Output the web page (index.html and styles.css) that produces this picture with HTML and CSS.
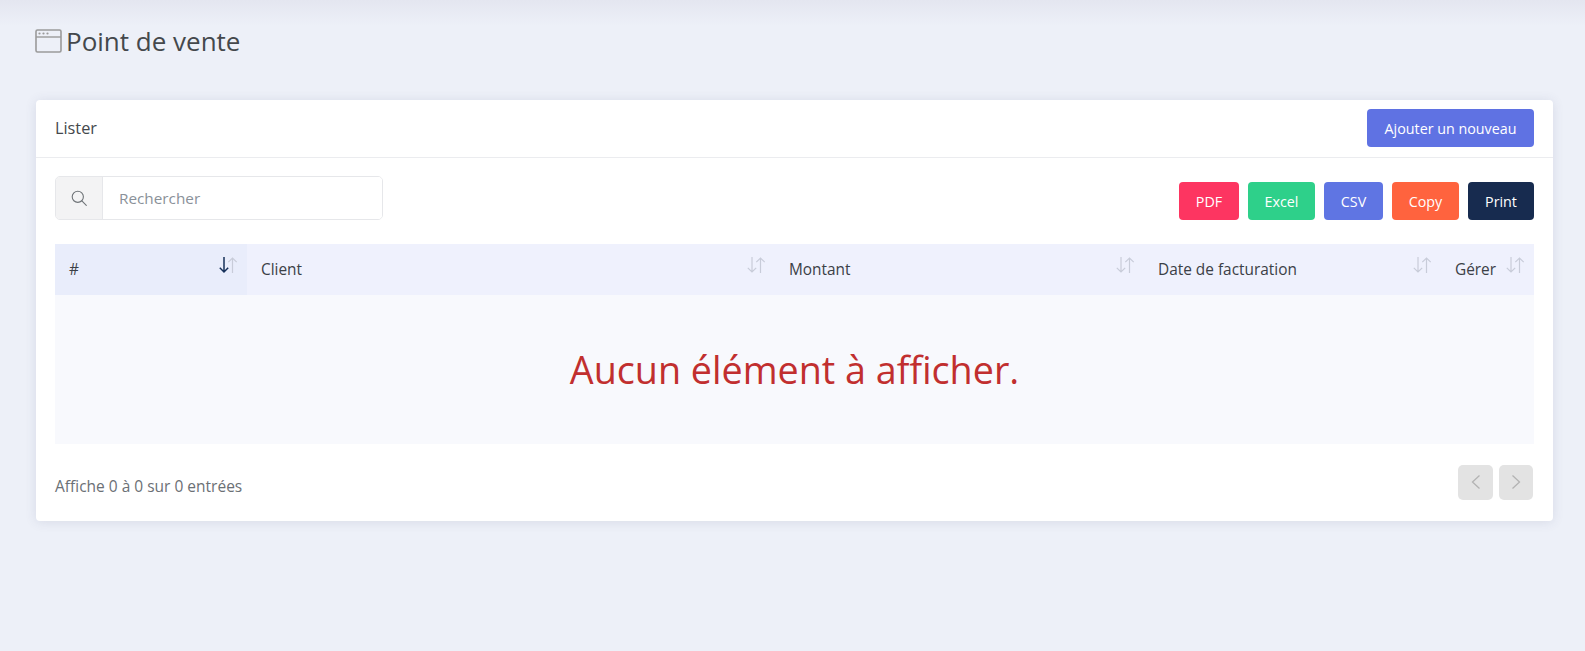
FILE: index.html
```html
<!DOCTYPE html>
<html lang="fr">
<head>
    <meta charset="UTF-8">
    <meta name="viewport" content="width=device-width, initial-scale=1.0">
    <title>Point de vente</title>
    <link rel="stylesheet" href="styles.css">
</head>
<body>
    <div class="page-title">
        <svg class="title-icon" width="27" height="24" viewBox="0 0 27 24" fill="none" stroke="#9a9a9a">
            <rect x="1" y="1" width="25" height="22" rx="1.5" stroke-width="1.6"/>
            <path d="M1 8h25" stroke-width="1.4"/>
            <circle cx="4.5" cy="4.5" r="1.1" fill="#9a9a9a" stroke="none"/>
            <circle cx="8.5" cy="4.5" r="1.1" fill="#9a9a9a" stroke="none"/>
            <circle cx="12.5" cy="4.5" r="1.1" fill="#9a9a9a" stroke="none"/>
        </svg>
        <h1>Point de vente</h1>
    </div>

    <div class="card">
        <div class="card-header">
            <span class="card-title">Lister</span>
            <button class="btn btn-primary btn-add">Ajouter un nouveau</button>
        </div>

        <div class="card-body">
            <div class="toolbar">
                <div class="search">
                    <span class="search-icon">
                        <svg width="16" height="16" viewBox="0 0 16 16" fill="none" stroke="#6f7478" stroke-width="1.1">
                            <circle cx="6.8" cy="6.8" r="5.6"/>
                            <path d="M10.9 10.9l4.4 4.4" stroke-linecap="round"/>
                        </svg>
                    </span>
                    <input class="search-input" type="text" placeholder="Rechercher">
                </div>
                <div class="exports">
                    <button class="btn btn-pdf">PDF</button>
                    <button class="btn btn-excel">Excel</button>
                    <button class="btn btn-csv">CSV</button>
                    <button class="btn btn-copy">Copy</button>
                    <button class="btn btn-print">Print</button>
                </div>
            </div>

            <table class="data-table">
                <colgroup>
                    <col class="col-num">
                    <col class="col-client">
                    <col class="col-amount">
                    <col class="col-date">
                    <col class="col-manage">
                </colgroup>
                <thead>
                    <tr>
                        <th class="sorted">
                            <div class="th-inner"><span>#</span>
                                <svg class="sort" width="20" height="18" viewBox="0 0 20 18" fill="none" stroke-width="1.2">
                                    <path d="M6 1v15M1.8 11.8L6 16l4.2-4.2" stroke="#16305a" stroke-width="1.5"/>
                                    <path d="M14.5 17V2M10.3 6.2L14.5 2l4.2 4.2" stroke="#c8ccd9"/>
                                </svg>
                            </div>
                        </th>
                        <th>
                            <div class="th-inner"><span>Client</span>
                                <svg class="sort" width="20" height="18" viewBox="0 0 20 18" fill="none" stroke="#c8ccd9" stroke-width="1.2">
                                    <path d="M6 1v15M1.8 11.8L6 16l4.2-4.2"/>
                                    <path d="M14.5 17V2M10.3 6.2L14.5 2l4.2 4.2"/>
                                </svg>
                            </div>
                        </th>
                        <th>
                            <div class="th-inner"><span>Montant</span>
                                <svg class="sort" width="20" height="18" viewBox="0 0 20 18" fill="none" stroke="#c8ccd9" stroke-width="1.2">
                                    <path d="M6 1v15M1.8 11.8L6 16l4.2-4.2"/>
                                    <path d="M14.5 17V2M10.3 6.2L14.5 2l4.2 4.2"/>
                                </svg>
                            </div>
                        </th>
                        <th>
                            <div class="th-inner"><span>Date de facturation</span>
                                <svg class="sort" width="20" height="18" viewBox="0 0 20 18" fill="none" stroke="#c8ccd9" stroke-width="1.2">
                                    <path d="M6 1v15M1.8 11.8L6 16l4.2-4.2"/>
                                    <path d="M14.5 17V2M10.3 6.2L14.5 2l4.2 4.2"/>
                                </svg>
                            </div>
                        </th>
                        <th>
                            <div class="th-inner"><span>Gérer</span>
                                <svg class="sort" width="20" height="18" viewBox="0 0 20 18" fill="none" stroke="#c8ccd9" stroke-width="1.2">
                                    <path d="M6 1v15M1.8 11.8L6 16l4.2-4.2"/>
                                    <path d="M14.5 17V2M10.3 6.2L14.5 2l4.2 4.2"/>
                                </svg>
                            </div>
                        </th>
                    </tr>
                </thead>
                <tbody>
                    <tr>
                        <td class="empty" colspan="5">Aucun élément à afficher.</td>
                    </tr>
                </tbody>
            </table>

            <div class="table-footer">
                <span class="entries">Affiche 0 à 0 sur 0 entrées</span>
                <div class="pager">
                    <button class="page-btn page-prev">
                        <svg width="10" height="16" viewBox="0 0 10 16" fill="none" stroke="#b3b3b3" stroke-width="1.3"><path d="M8.5 1.5L1.5 8l7 6.5"/></svg>
                    </button>
                    <button class="page-btn page-next">
                        <svg width="10" height="16" viewBox="0 0 10 16" fill="none" stroke="#b3b3b3" stroke-width="1.3"><path d="M1.5 1.5L8.5 8l-7 6.5"/></svg>
                    </button>
                </div>
            </div>
        </div>
    </div>
</body>
</html>
```

FILE: styles.css
```css
* {
    box-sizing: border-box;
}

body {
    margin: 0;
    height: 651px;
    overflow: hidden;
    padding: 0 32px 0 36px;
    font-family: "Open Sans", sans-serif;
    color: #3b3f44;
    background-color: #edf0f8;
    background-image: linear-gradient(to bottom, #e4e6f0 0, #edf0f8 26px);
}

.page-title {
    display: flex;
    align-items: center;
    height: 100px;
    padding-bottom: 18px;
    margin-left: -1px;
}

.title-icon {
    flex: none;
    margin-right: 4px;
}

.page-title h1 {
    margin: 0;
    font-size: 26px;
    font-weight: 400;
    line-height: 32px;
    color: #44484c;
}

.card {
    height: 421px;
    background: #fff;
    border-radius: 4px;
    box-shadow: 0 1px 12px rgba(60, 65, 110, 0.12);
}

.card-header {
    display: flex;
    align-items: center;
    justify-content: space-between;
    height: 58px;
    padding: 0 19px 1px;
    border-bottom: 1px solid #ebecef;
}

.card-title {
    font-size: 16.3px;
    color: #44484c;
}

.card-body {
    padding: 18px 19px 0;
}

.btn {
    height: 38px;
    padding: 0;
    border: none;
    border-radius: 4px;
    font-family: inherit;
    font-size: 14.3px;
    color: #fff;
}

.btn-primary {
    background: #5f72e3;
}

.btn-add {
    width: 167px;
}

.toolbar {
    display: flex;
    align-items: flex-end;
    justify-content: space-between;
    height: 44px;
}

.search {
    display: flex;
    width: 328px;
    height: 44px;
    border: 1px solid #e6e7ea;
    border-radius: 5px;
    overflow: hidden;
}

.search-icon {
    display: flex;
    align-items: center;
    justify-content: center;
    width: 47px;
    background: #f3f3f4;
    border-right: 1px solid #e6e7ea;
}

.search-input {
    flex: 1;
    min-width: 0;
    padding: 0 16px;
    border: none;
    outline: none;
    font-family: inherit;
    font-size: 15.3px;
}

.search-input::placeholder {
    color: #8a9199;
}

.exports {
    display: flex;
    gap: 9px;
}

.btn-pdf {
    width: 60px;
    background: #fd3561;
}

.btn-excel {
    width: 67px;
    background: #2ed08a;
}

.btn-csv {
    width: 59px;
    background: #5f75e3;
}

.btn-copy {
    width: 67px;
    background: #ff633e;
}

.btn-print {
    width: 66px;
    background: #172b4f;
}

.data-table {
    width: 1479px;
    margin-top: 24px;
    border-collapse: collapse;
    table-layout: fixed;
}

.col-num {
    width: 192px;
}

.col-client {
    width: 528px;
}

.col-amount {
    width: 369px;
}

.col-date {
    width: 297px;
}

.col-manage {
    width: 93px;
}

.data-table th {
    height: 51px;
    padding: 0 9px 0 14px;
    font-size: 15.4px;
    font-weight: 400;
    text-align: left;
    color: #3b4046;
    background: #eff1fd;
}

.data-table th.sorted {
    background: #e9edfb;
}

.th-inner {
    display: flex;
    justify-content: space-between;
    align-items: center;
    margin-top: -1px;
}

.sort {
    flex: none;
    margin-top: -9px;
}

.empty {
    height: 149px;
    padding: 0;
    font-size: 37.7px;
    text-align: center;
    color: #c12f2f;
    background: #f8f9fd;
}

.table-footer {
    display: flex;
    align-items: center;
    justify-content: space-between;
    margin-top: 20px;
    height: 36px;
}

.entries {
    font-size: 15.5px;
    padding-top: 8px;
    color: #6b7075;
}

.pager {
    display: flex;
    gap: 6px;
    padding-right: 1px;
}

.page-btn {
    display: flex;
    align-items: center;
    justify-content: center;
    height: 35px;
    padding: 0;
    border: none;
    border-radius: 5px;
    background: #e3e3e3;
}

.page-prev {
    width: 35px;
}

.page-next {
    width: 34px;
}
```
